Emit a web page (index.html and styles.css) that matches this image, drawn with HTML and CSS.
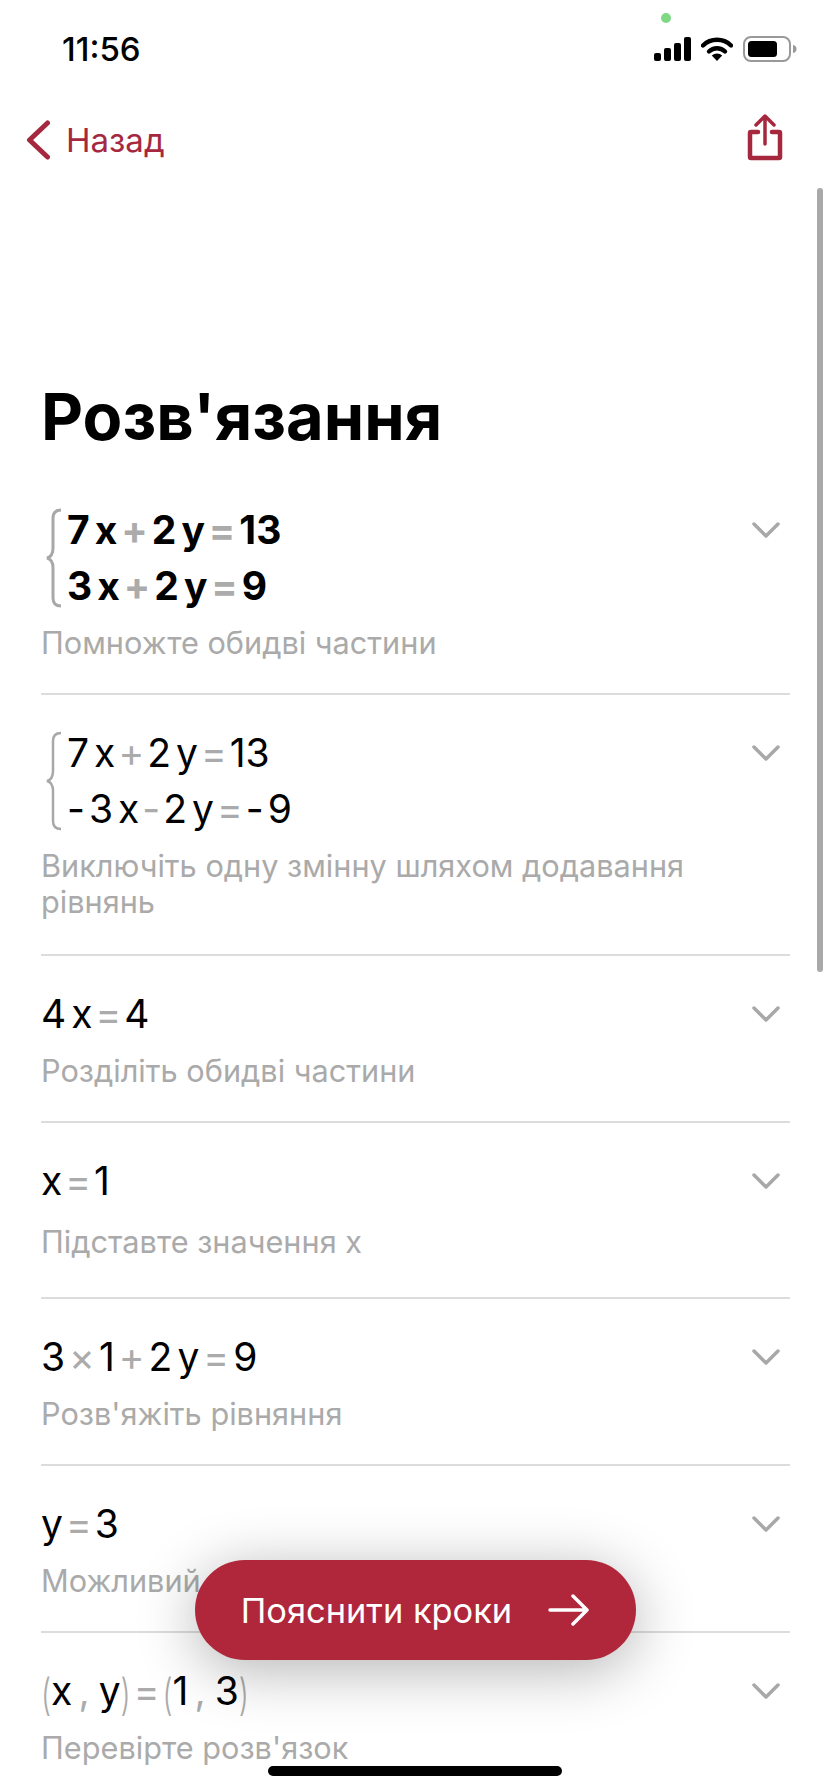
FILE: index.html
```html
<!DOCTYPE html>
<html lang="uk">
<head>
    <meta charset="UTF-8">
    <meta name="viewport" content="width=device-width, initial-scale=1.0">
    <title>Розв'язання</title>
    <link rel="stylesheet" href="styles.css">
</head>
<body>
    <div class="screen">
        <div class="status-bar">
            <span class="time">11:56</span>
            <div class="status-icons">
                <svg width="38" height="24" viewBox="0 0 38 24"><rect x="1" y="16" width="7" height="8" rx="2"/><rect x="11" y="11" width="7" height="13" rx="2"/><rect x="21" y="6" width="7" height="18" rx="2"/><rect x="31" y="0" width="7" height="24" rx="2"/></svg>
                <svg width="32" height="24" viewBox="0 0 32 24"><path d="M2 8.5a20 20 0 0 1 28 0" fill="none" stroke="#000" stroke-width="4.4" stroke-linecap="round"/><path d="M8 14.5a11.500 11.500 0 0 1 16 0" fill="none" stroke="#000" stroke-width="4.400" stroke-linecap="round"/><path d="M10.800 18.600a7.500 7.500 0 0 1 10.400 0L16 24z"/></svg>
                <svg width="54" height="26" viewBox="0 0 54 26"><rect x="1" y="1" width="46" height="24" rx="7" fill="none" stroke="#999" stroke-width="2"/><rect x="5" y="5" width="29" height="16" rx="3.500"/><path d="M50 9c2.500.5 3.500 2 3.500 4s-1 3.500-3.500 4z" fill="#999"/></svg>
            </div>
            <span class="camera-dot"></span>
        </div>

        <div class="nav-bar">
            <a class="back-link">
                <svg width="26" height="40" viewBox="0 0 26 40"><path d="M23.500 3L5.500 20l18 17" fill="none" stroke="#a6283f" stroke-width="5" stroke-linecap="round" stroke-linejoin="round"/></svg>
                <span>Назад</span>
            </a>
            <svg class="share-icon" width="36" height="48" viewBox="0 0 36 48"><path d="M11 19H4a1 1 0 0 0-1 1v24a1 1 0 0 0 1 1h28a1 1 0 0 0 1-1V20a1 1 0 0 0-1-1h-7" fill="none" stroke="#a6283f" stroke-width="4.500" stroke-linecap="round"/><path d="M18 31V3M9 12l9-9 9 9" fill="none" stroke="#a6283f" stroke-width="3.500" stroke-linecap="round" stroke-linejoin="round"/></svg>
        </div>

        <h1 class="page-title">Розв'язання</h1>

        <div class="steps">
            <div class="step">
                <div class="step-body">
                    <div class="system bold">
                        <svg class="brace" width="19" height="100" viewBox="0 0 19 100"><path d="M17 2c-6 0-8 3-8 8v30c0 5-2 9-6 10 4 1 6 5 6 10v30c0 5 2 8 8 8" fill="none" stroke="#a8a8a8" stroke-width="3"/></svg>
                        <div class="system-lines">
                            <div class="math">7<i>x</i><b>+</b>2<i>y</i><b>=</b>13</div>
                            <div class="math">3<i>x</i><b>+</b>2<i>y</i><b>=</b>9</div>
                        </div>
                    </div>
                    <p class="caption">Помножте обидві частини</p>
                </div>
                <svg class="chevron" width="30" height="18" viewBox="0 0 30 18"><path d="M3 3l12 12L27 3" fill="none" stroke="#a8a8a8" stroke-width="3.500" stroke-linecap="round" stroke-linejoin="round"/></svg>
            </div>

            <div class="step step-wrap">
                <div class="step-body">
                    <div class="system">
                        <svg class="brace" width="19" height="100" viewBox="0 0 19 100"><path d="M17 2c-6 0-8 3-8 8v30c0 5-2 9-6 10 4 1 6 5 6 10v30c0 5 2 8 8 8" fill="none" stroke="#a8a8a8" stroke-width="2.500"/></svg>
                        <div class="system-lines">
                            <div class="math">7<i>x</i><b>+</b>2<i>y</i><b>=</b>13</div>
                            <div class="math"><em>-</em>3<i>x</i><b>-</b>2<i>y</i><b>=</b><em>-</em>9</div>
                        </div>
                    </div>
                    <p class="caption">Виключіть одну змінну шляхом додавання рівнянь</p>
                </div>
                <svg class="chevron" width="30" height="18" viewBox="0 0 30 18"><path d="M3 3l12 12L27 3" fill="none" stroke="#a8a8a8" stroke-width="3.500" stroke-linecap="round" stroke-linejoin="round"/></svg>
            </div>

            <div class="step">
                <div class="step-body">
                    <div class="math">4<i>x</i><b>=</b>4</div>
                    <p class="caption">Розділіть обидві частини</p>
                </div>
                <svg class="chevron" width="30" height="18" viewBox="0 0 30 18"><path d="M3 3l12 12L27 3" fill="none" stroke="#a8a8a8" stroke-width="3.500" stroke-linecap="round" stroke-linejoin="round"/></svg>
            </div>

            <div class="step step-tall">
                <div class="step-body">
                    <div class="math"><i class="first">x</i><b>=</b>1</div>
                    <p class="caption">Підставте значення х</p>
                </div>
                <svg class="chevron" width="30" height="18" viewBox="0 0 30 18"><path d="M3 3l12 12L27 3" fill="none" stroke="#a8a8a8" stroke-width="3.500" stroke-linecap="round" stroke-linejoin="round"/></svg>
            </div>

            <div class="step">
                <div class="step-body">
                    <div class="math math-wide">3<b>×</b>1<b>+</b>2<i>y</i><b>=</b>9</div>
                    <p class="caption">Розв'яжіть рівняння</p>
                </div>
                <svg class="chevron" width="30" height="18" viewBox="0 0 30 18"><path d="M3 3l12 12L27 3" fill="none" stroke="#a8a8a8" stroke-width="3.500" stroke-linecap="round" stroke-linejoin="round"/></svg>
            </div>

            <div class="step">
                <div class="step-body">
                    <div class="math"><i class="first">y</i><b>=</b>3</div>
                    <p class="caption">Можливий розв'язок</p>
                </div>
                <svg class="chevron" width="30" height="18" viewBox="0 0 30 18"><path d="M3 3l12 12L27 3" fill="none" stroke="#a8a8a8" stroke-width="3.500" stroke-linecap="round" stroke-linejoin="round"/></svg>
            </div>

            <div class="step">
                <div class="step-body">
                    <div class="math"><u>(</u><i class="first">x</i><s>,</s><i class="first">y</i><u>)</u><b>=</b><u>(</u>1<s>,</s>3<u>)</u></div>
                    <p class="caption">Перевірте розв'язок</p>
                </div>
                <svg class="chevron" width="30" height="18" viewBox="0 0 30 18"><path d="M3 3l12 12L27 3" fill="none" stroke="#a8a8a8" stroke-width="3.500" stroke-linecap="round" stroke-linejoin="round"/></svg>
            </div>
        </div>

        <div class="scroll-thumb"></div>

        <button class="explain-btn">
            <span>Пояснити кроки</span>
            <svg width="42" height="32" viewBox="0 0 42 32"><path d="M2 16h37M25 2l14 14-14 14" fill="none" stroke="#fff" stroke-width="3.500" stroke-linecap="round" stroke-linejoin="round"/></svg>
        </button>

        <div class="home-bar"></div>
    </div>
</body>
</html>
```

FILE: styles.css
```css
body {
    margin: 0;
    padding: 0;
    background: #fff;
    font-family: 'Inter', 'Noto Sans', sans-serif;
    color: #000;
}

.screen {
    position: relative;
    width: 828px;
    height: 1792px;
    overflow: hidden;
}

.status-bar {
    display: flex;
    justify-content: space-between;
    align-items: center;
    height: 50px;
    padding: 24px 31px 14px 62px;
}

.time {
    font-size: 33px;
    font-weight: 500;
}

.status-icons {
    display: flex;
    align-items: center;
    gap: 10px;
}

.camera-dot {
    position: absolute;
    left: 661px;
    top: 13px;
    width: 10px;
    height: 10px;
    border-radius: 50%;
    background: #7fd884;
}

.nav-bar {
    display: flex;
    justify-content: space-between;
    align-items: center;
    height: 70px;
    margin-top: 17px;
    padding: 0 45px 0 24px;
    margin-bottom: 204px;
}

.back-link {
    display: flex;
    align-items: center;
    gap: 16px;
    color: #a6283f;
    font-size: 33px;
}

.share-icon {
    margin-top: -6px;
}

.page-title {
    margin: 0 41px;
    font-size: 65px;
    line-height: 76px;
    font-weight: 700;
}

.steps {
    margin: 0 38px 0 41px;
    padding-top: 17px;
}

.step {
    display: flex;
    justify-content: space-between;
    align-items: flex-start;
    padding: 30px 6px 32px 0;
    border-bottom: 2px solid #dcdcdc;
}

.step-wrap {
    padding-bottom: 34px;
}

.step-tall {
    padding-bottom: 37px;
}

.step-tall .caption {
    margin-top: 15px;
}

.step-body {
    flex: 1;
    min-width: 0;
    padding-right: 10px;
}

.chevron {
    margin-top: 19px;
    margin-right: 3px;
}

.system {
    display: flex;
    align-items: center;
    gap: 4px;
    margin-left: 3px;
}

.math {
    font-size: 39px;
    line-height: 56px;
    font-weight: 400;
    white-space: nowrap;
}

.bold .math {
    font-weight: 700;
}

.math i {
    font-style: normal;
    margin-left: 5px;
}

.math i.first {
    margin-left: 0;
}

.math b {
    font-weight: inherit;
    color: #ababab;
    margin: 0 3px;
}

.bold .math b {
    margin: 0 4px;
}

.math-wide b {
    margin: 0 4px;
}

.math em {
    font-style: normal;
    margin-right: 4px;
}

.math u {
    display: inline-block;
    text-decoration: none;
    color: #ababab;
    font-weight: 300;
    font-size: 29px;
    line-height: 30px;
    transform: scaleY(1.5);
}

.math s {
    text-decoration: none;
    color: #ababab;
    margin: 0 9px 0 6px;
}

.caption {
    margin: 11px 0 0;
    font-size: 30.7px;
    line-height: 36px;
    color: #aaa;
}

.scroll-thumb {
    position: absolute;
    left: 817px;
    top: 188px;
    width: 6px;
    height: 784px;
    border-radius: 3px;
    background: #a9a9a9;
}

.explain-btn {
    position: absolute;
    left: 195px;
    top: 1560px;
    display: flex;
    align-items: center;
    justify-content: center;
    gap: 36px;
    width: 441px;
    height: 100px;
    border: none;
    border-radius: 50px;
    background: #b0263b;
    color: #fff;
    font-family: inherit;
    font-size: 34.4px;
    box-shadow: 0 10px 60px rgba(0, 0, 0, 0.3);
}

.home-bar {
    position: absolute;
    left: 268px;
    top: 1766px;
    width: 294px;
    height: 10px;
    border-radius: 5px;
    background: #000;
}
```
